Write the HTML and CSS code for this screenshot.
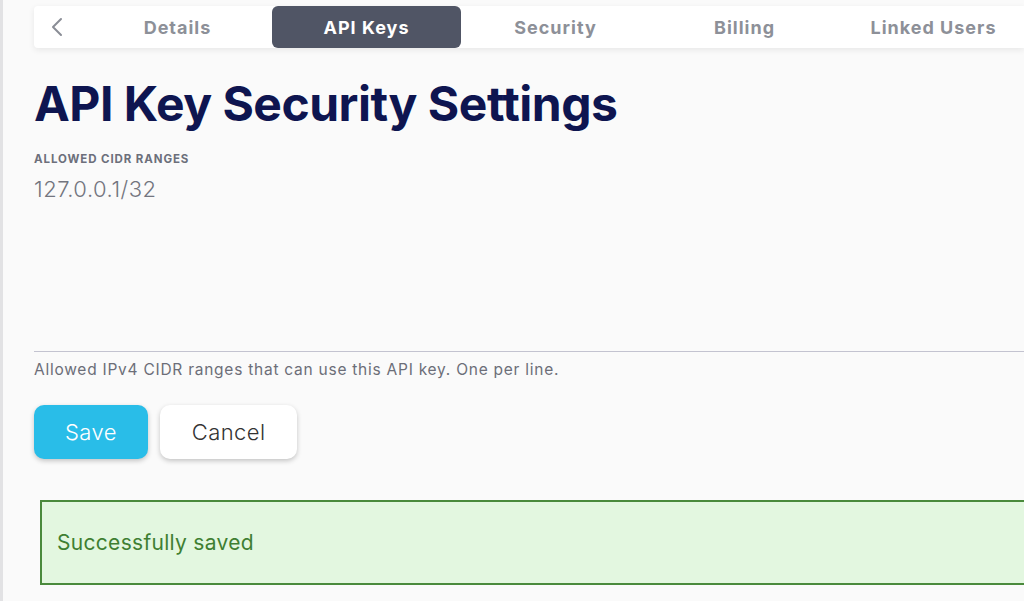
FILE: index.html
```html
<!DOCTYPE html>
<html lang="en">
<head>
  <meta charset="UTF-8">
  <title>API Key Security Settings</title>
  <meta name="viewport" content="width=device-width, initial-scale=1.0">
  <link rel="stylesheet" href="styles.css">
</head>
<body>

<div class="page">
  <nav class="tabs">
    <button class="back" aria-label="Back">
      <svg width="14" height="20" viewBox="0 0 14 20"><path d="M11 2 L3 10 L11 18" fill="none" stroke="#8a8d96" stroke-width="2" stroke-linecap="round" stroke-linejoin="round"/></svg>
    </button>
    <a class="tab">Details</a>
    <a class="tab active">API Keys</a>
    <a class="tab">Security</a>
    <a class="tab">Billing</a>
    <a class="tab">Linked Users</a>
  </nav>

  <h1>API Key Security Settings</h1>

  <div class="field">
    <label for="cidr">Allowed CIDR ranges</label>
    <textarea id="cidr" rows="6">127.0.0.1/32</textarea>
    <p class="hint">Allowed IPv4 CIDR ranges that can use this API key. One per line.</p>
  </div>

  <div class="actions">
    <button class="btn primary">Save</button>
    <button class="btn">Cancel</button>
  </div>

  <div class="alert success">Successfully saved</div>
</div>

</body>
</html>
```

FILE: styles.css
```css
html, body {
  margin: 0;
  height: 100%;
}
body {
  font-family: Inter, "Noto Sans", sans-serif;
  background: #fafafa;
  border-left: 3px solid #e2e2e4;
  overflow: hidden;
}
.page {
  padding: 6px 0 0 31px;
}
.tabs {
  display: flex;
  align-items: stretch;
  height: 42px;
  background: #fff;
  border-radius: 4px 0 0 4px;
  box-shadow: 0 2px 6px rgba(0,0,0,0.08);
}
.back {
  flex: 0 0 49px;
  border: none;
  background: none;
  padding: 0 0 0 16px;
  display: flex;
  align-items: center;
}
.tab {
  flex: 0 0 189px;
  display: flex;
  align-items: center;
  justify-content: center;
  font-size: 18px;
  font-weight: 700;
  letter-spacing: 1px;
  color: #8d9098;
  border-radius: 6px;
}
.tab.active {
  background: #505565;
  color: #fff;
}
h1 {
  margin: 28px 0 0;
  font-size: 48px;
  font-weight: 700;
  color: #0e1550;
  letter-spacing: -0.5px;
  line-height: 56px;
}
.field {
  margin-top: 20px;
}
label {
  display: block;
  font-size: 11.5px;
  font-weight: 700;
  text-transform: uppercase;
  color: #6c6f7b;
  letter-spacing: 0.9px;
}
textarea {
  display: block;
  width: 100%;
  box-sizing: border-box;
  margin-top: 10px;
  height: 176px;
  padding: 0;
  border: none;
  border-bottom: 1px solid #c3c3d0;
  background: transparent;
  resize: none;
  font-family: inherit;
  font-size: 22px;
  font-weight: 300;
  letter-spacing: 0.5px;
  color: #73757f;
  outline: none;
}
.hint {
  margin: 8px 0 0;
  font-size: 15.5px;
  letter-spacing: 0.75px;
  color: #6c6e78;
}
.actions {
  display: flex;
  gap: 12px;
  margin-top: 26px;
}
.btn {
  height: 54px;
  padding: 0 32px;
  border: none;
  border-radius: 10px;
  background: #fff;
  font-family: inherit;
  font-size: 22px;
  font-weight: 300;
  letter-spacing: 0.4px;
  color: #333;
  box-shadow: 0 2px 5px rgba(0,0,0,0.22);
}
.btn.primary {
  padding: 0 31px;
  background: #29bde8;
  color: #fff;
}
.alert {
  margin: 41px 0 0 6px;
  height: 81px;
  display: flex;
  align-items: center;
  padding-left: 15px;
  font-size: 21px;
  letter-spacing: 0.3px;
}
.success {
  background: #e3f7e0;
  border: 2px solid #4a8a3c;
  border-right: none;
  color: #3f7f32;
}
```
